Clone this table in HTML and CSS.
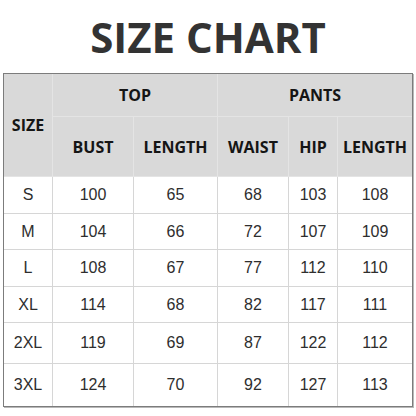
FILE: index.html
```html
<!DOCTYPE html>
<html>
<head>
<meta charset="utf-8">
<link rel="stylesheet" href="styles.css">
</head>
<body>
<h1 class="title">SIZE CHART</h1>
<div class="chart">
  <div class="cell head size-h">SIZE</div>
  <div class="cell head top-h">TOP</div>
  <div class="cell head pants-h">PANTS</div>
  <div class="cell head">BUST</div>
  <div class="cell head">LENGTH</div>
  <div class="cell head">WAIST</div>
  <div class="cell head">HIP</div>
  <div class="cell head last">LENGTH</div>

  <div class="cell">S</div><div class="cell">100</div><div class="cell">65</div><div class="cell">68</div><div class="cell">103</div><div class="cell last">108</div>
  <div class="cell">M</div><div class="cell">104</div><div class="cell">66</div><div class="cell">72</div><div class="cell">107</div><div class="cell last">109</div>
  <div class="cell">L</div><div class="cell">108</div><div class="cell">67</div><div class="cell">77</div><div class="cell">112</div><div class="cell last">110</div>
  <div class="cell">XL</div><div class="cell">114</div><div class="cell">68</div><div class="cell">82</div><div class="cell">117</div><div class="cell last">111</div>
  <div class="cell">2XL</div><div class="cell">119</div><div class="cell">69</div><div class="cell">87</div><div class="cell">122</div><div class="cell last">112</div>
  <div class="cell bottom">3XL</div><div class="cell bottom">124</div><div class="cell bottom">70</div><div class="cell bottom">92</div><div class="cell bottom">127</div><div class="cell bottom last">113</div>
</div>
</body>
</html>
```
FILE: styles.css
```css
* { box-sizing: border-box; }
html, body { margin: 0; padding: 0; background: #ffffff; }
body { width: 416px; height: 416px; overflow: hidden; }

.title {
  margin: 0;
  height: 73px;
  line-height: 73px;
  text-align: center;
  font-family: "Open Sans", "Noto Sans", sans-serif;
  font-weight: 700;
  font-size: 42px;
  color: #333333;
  letter-spacing: 0;
}

.chart {
  margin-left: 3px;
  width: 410px;
  display: grid;
  grid-template-columns: 49px 81px 84px 71px 49px 74px;
  grid-template-rows: 43px 60px 37px 36px 37px 36px 41px 42px;
  border: 1px solid #7c7c7c;
  box-shadow: 1px 1px 0 #b8b8b8;
}

.cell {
  display: flex;
  align-items: center;
  justify-content: center;
  border-right: 1px solid #d6d6d6;
  border-bottom: 1px solid #d6d6d6;
  font-family: "Liberation Sans", Arial, sans-serif;
  font-size: 16px;
  color: #2e2e2e;
}

.cell.last { border-right: none; }
.cell.bottom { border-bottom: none; }

.head {
  background: #d9d9d9;
  font-family: "Open Sans", "Noto Sans", sans-serif;
  font-weight: 700;
  font-size: 16px;
  color: #151515;
  border-color: #e4e4e4;
}

.size-h { grid-row: 1 / span 2; grid-column: 1; }
.top-h { grid-column: 2 / span 2; }
.pants-h { grid-column: 4 / span 3; border-right: none; }
```
